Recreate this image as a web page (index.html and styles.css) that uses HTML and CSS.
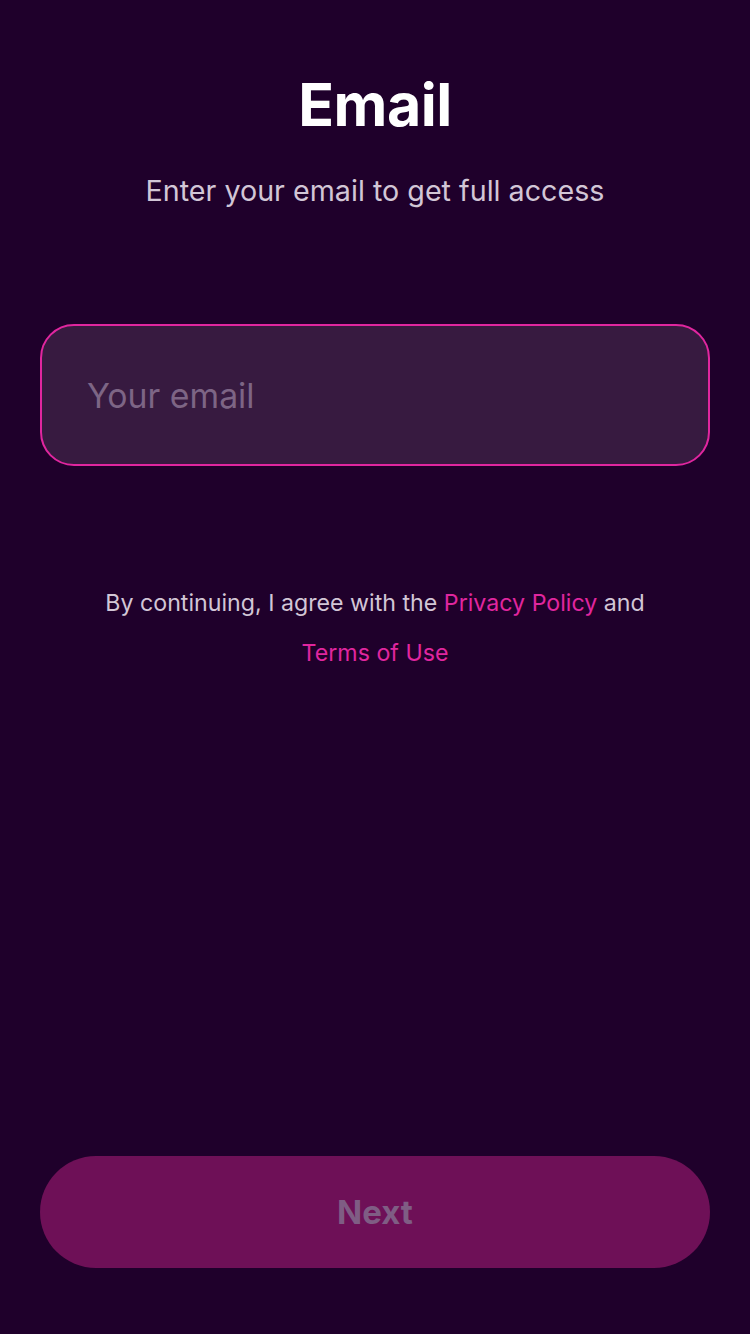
FILE: index.html
```html
<!DOCTYPE html>
<html>
<head>
<meta charset="utf-8">
<link rel="stylesheet" href="styles.css">
</head>
<body>
<div class="screen">
  <h1 class="title">Email</h1>
  <p class="subtitle">Enter your email to get full access</p>
  <div class="field"><span class="placeholder">Your email</span></div>
  <p class="legal">By continuing, I agree with the <span class="link">Privacy Policy</span> and<br><span class="link">Terms of Use</span></p>
  <div class="spacer"></div>
  <button class="next">Next</button>
</div>
</body>
</html>
```
FILE: styles.css
```css
html, body {
  margin: 0;
  padding: 0;
  background: #1f002b;
}
.screen {
  width: 750px;
  height: 1334px;
  box-sizing: border-box;
  padding: 0 40px 66px;
  display: flex;
  flex-direction: column;
  font-family: Inter, "Noto Sans", sans-serif;
}
.title {
  margin: 72px 0 0;
  text-align: center;
  color: #ffffff;
  font-size: 59px;
  line-height: 66px;
  font-weight: 700;
  letter-spacing: -0.5px;
}
.subtitle {
  margin: 35px 0 0;
  text-align: center;
  color: #d2c6d6;
  font-size: 28.7px;
  line-height: 36px;
  font-weight: 400;
}
.field {
  margin-top: 115px;
  height: 142px;
  box-sizing: border-box;
  border: 2px solid #e0269f;
  border-radius: 34px;
  background: #371a40;
  display: flex;
  align-items: center;
  padding-left: 45px;
}
.placeholder {
  color: #7d6585;
  font-size: 33.8px;
}
.legal {
  margin: 112px 0 0;
  text-align: center;
  color: #d2c6d6;
  font-size: 23.2px;
  line-height: 50px;
}
.link {
  color: #e0269f;
}
.spacer {
  flex: 1;
}
.next {
  height: 112px;
  border: none;
  border-radius: 56px;
  background: #6e1057;
  color: #7f5d84;
  font-family: Inter, "Noto Sans", sans-serif;
  font-size: 33px;
  font-weight: 700;
  padding: 0;
}
```
